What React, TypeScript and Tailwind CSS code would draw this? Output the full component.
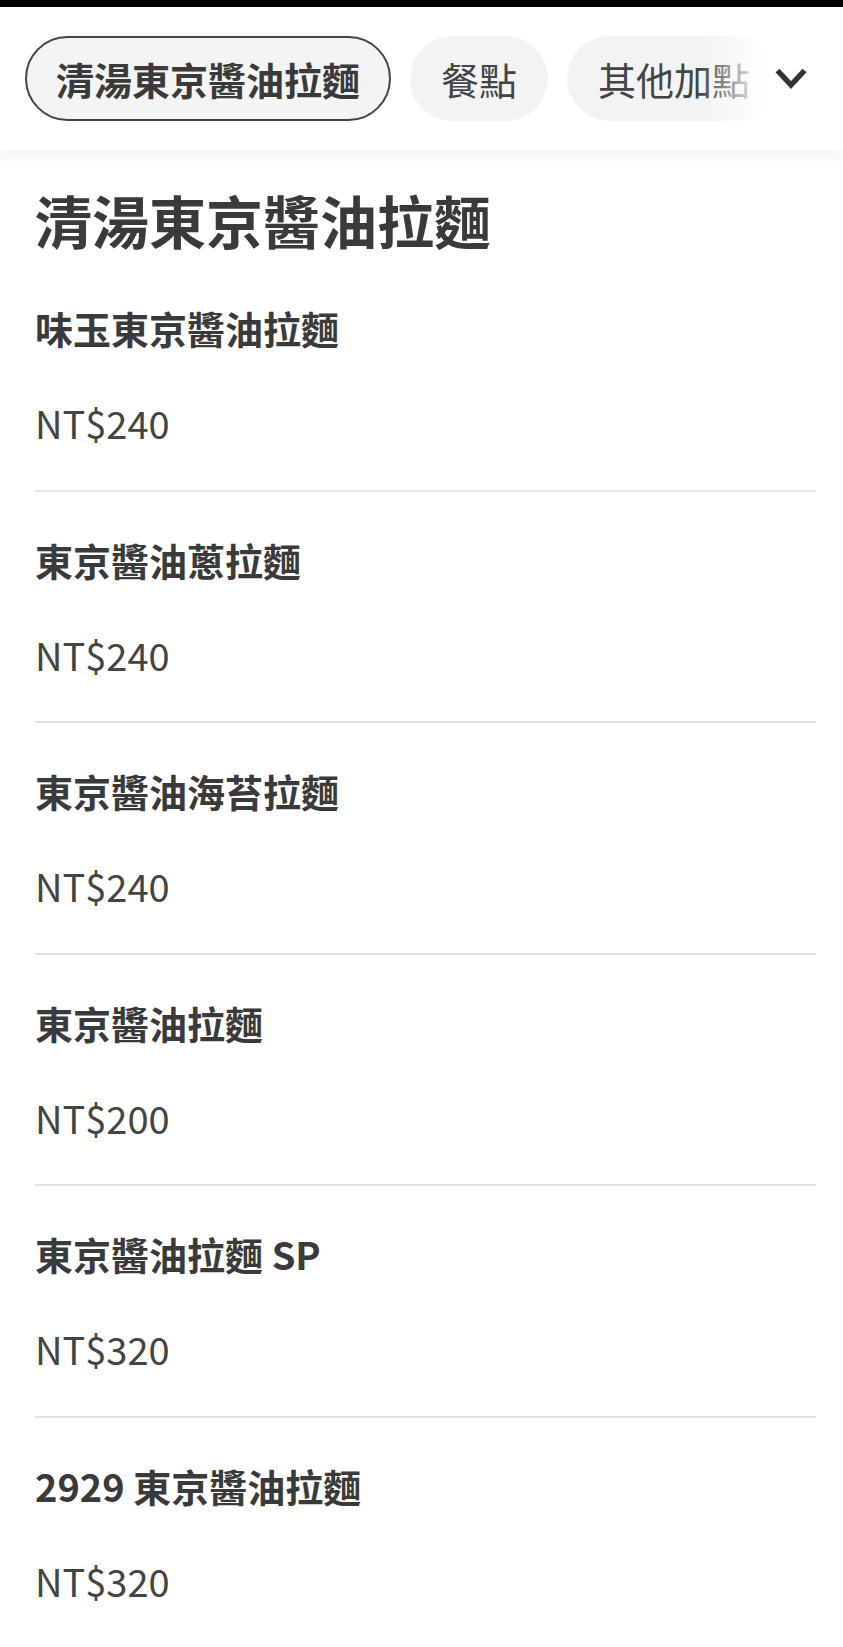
const categories = [
  { label: '清湯東京醬油拉麵', active: true },
  { label: '餐點', active: false },
  { label: '其他加點', active: false },
];

const items = [
  { name: '味玉東京醬油拉麵', price: 'NT$240' },
  { name: '東京醬油蔥拉麵', price: 'NT$240' },
  { name: '東京醬油海苔拉麵', price: 'NT$240' },
  { name: '東京醬油拉麵', price: 'NT$200' },
  { name: '東京醬油拉麵 SP', price: 'NT$320' },
  { name: '2929 東京醬油拉麵', price: 'NT$320' },
];

export default function App() {
  return (
    <div className="min-h-screen bg-white font-['Noto_Sans_CJK_TC','Noto_Sans_CJK_SC',sans-serif] text-[#333]">
      {/* status bar strip */}
      <div className="h-[7px] bg-black" />

      {/* category tabs */}
      <nav className="relative z-10 h-[143px] overflow-hidden bg-white shadow-[0_6px_18px_rgba(0,0,0,0.06)]">
        <div className="flex h-full items-center gap-[19px] whitespace-nowrap pl-[25px]">
          {categories.map((c) => (
            <button
              key={c.label}
              className={
                c.active
                  ? 'flex h-[85px] shrink-0 items-center rounded-full border-2 border-[#444] bg-[#f4f4f4] px-[29px] text-[38px] font-bold leading-none text-[#3a3a3a]'
                  : 'flex h-[85px] shrink-0 items-center rounded-full bg-[#f3f3f3] px-[31px] text-[38px] leading-none text-[#444]'
              }
            >
              {c.label}
            </button>
          ))}
        </div>

        {/* fade + dropdown */}
        <div className="absolute inset-y-0 right-0 flex w-[143px] items-center justify-end bg-gradient-to-r from-white/0 via-white via-45% to-white pr-[35px]">
          <svg width="34" height="23" viewBox="0 0 34 23" fill="none">
            <polyline points="3.5,3.5 17,18 30.5,3.5" stroke="#333" strokeWidth="5.5" strokeLinejoin="miter" />
          </svg>
        </div>
      </nav>

      <main className="pl-[35px] pr-[27px] pt-[41px]">
        <h2 className="mb-[12px] text-[57px] font-bold leading-none text-[#3a3a3a]">清湯東京醬油拉麵</h2>

        {items.map((item) => (
          <div key={item.name} className="border-b-2 border-[#e3e3e3] pt-[49px] pb-[47.5px]">
            <div className="text-[38px] font-bold leading-none text-[#3a3a3a]">{item.name}</div>
            <div className="mt-[57px] text-[38px] leading-none text-[#444]">{item.price}</div>
          </div>
        ))}
      </main>
    </div>
  );
}
